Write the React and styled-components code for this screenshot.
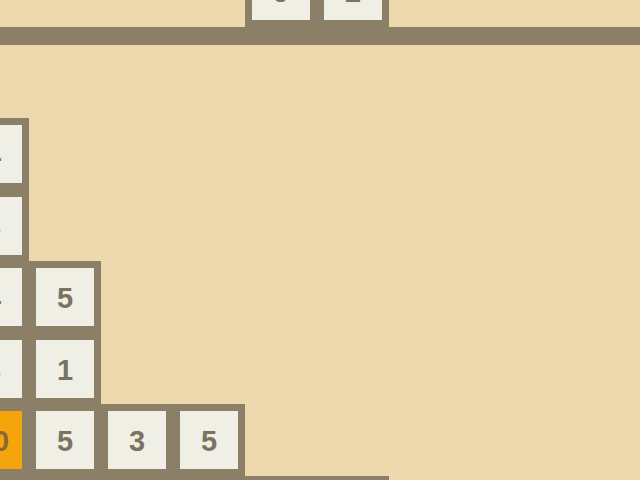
import React from 'react'
import styled, { createGlobalStyle } from 'styled-components'

const GlobalStyle = createGlobalStyle`
  html, body {
    margin: 0;
    padding: 0;
    background: #eed9ae;
  }
`

// stacks from left to right, values listed top to bottom; null = empty slot
const topStacks = [null, null, null, null, ['9'], ['2']]
const bottomStacks = [
  ['4', '3', '4', '3', { v: '10', hot: true }],
  ['5', '1', '5'],
  ['3'],
  ['5'],
]

function Stack({ tiles }) {
  if (!tiles) return <Slot />
  return (
    <Column>
      {tiles.map((t, i) => {
        const hot = typeof t === 'object'
        return (
          <Tile key={i} $hot={hot}>
            {hot ? t.v : t}
          </Tile>
        )
      })}
    </Column>
  )
}

function App() {
  return (
    <>
      <GlobalStyle />
      <Screen>
        <TopShelf>
          {topStacks.map((s, i) => (
            <Stack key={i} tiles={s} />
          ))}
        </TopShelf>
        <Bar />
        <BottomShelf>
          {bottomStacks.map((s, i) => (
            <Stack key={i} tiles={s} />
          ))}
        </BottomShelf>
        <Base />
      </Screen>
    </>
  )
}

export default App

const Screen = styled.div`
  width: 640px;
  height: 480px;
  overflow: hidden;
  background: #eed9ae;
  display: flex;
  flex-direction: column;
  font-family: "Liberation Sans", Arial, sans-serif;
`

const Shelf = styled.div`
  display: flex;
  align-items: flex-end;
  margin-left: -43px;
  flex-shrink: 0;
`

const TopShelf = styled(Shelf)`
  margin-top: -45px;
`

const BottomShelf = styled(Shelf)`
  margin-top: 73px;
`

const Slot = styled.div`
  width: 72px;
  height: 72px;
`

const Column = styled.div`
  display: flex;
  flex-direction: column;
  gap: 13.5px;
  padding: 7px;
  background: #8b7f68;
`

const Tile = styled.div`
  box-sizing: border-box;
  width: 58px;
  height: 58px;
  padding-top: 3px;
  display: flex;
  align-items: center;
  justify-content: center;
  background: ${(p) => (p.$hot ? '#f6a40c' : '#f0efe6')};
  color: ${(p) => (p.$hot ? '#8a6a34' : '#7a7362')};
  font-size: 29px;
  font-weight: bold;
`

const Bar = styled.div`
  height: 18px;
  flex-shrink: 0;
  background: #8b7f68;
`

const Base = styled.div`
  width: 389px;
  height: 20px;
  flex-shrink: 0;
  background: #8b7f68;
`
